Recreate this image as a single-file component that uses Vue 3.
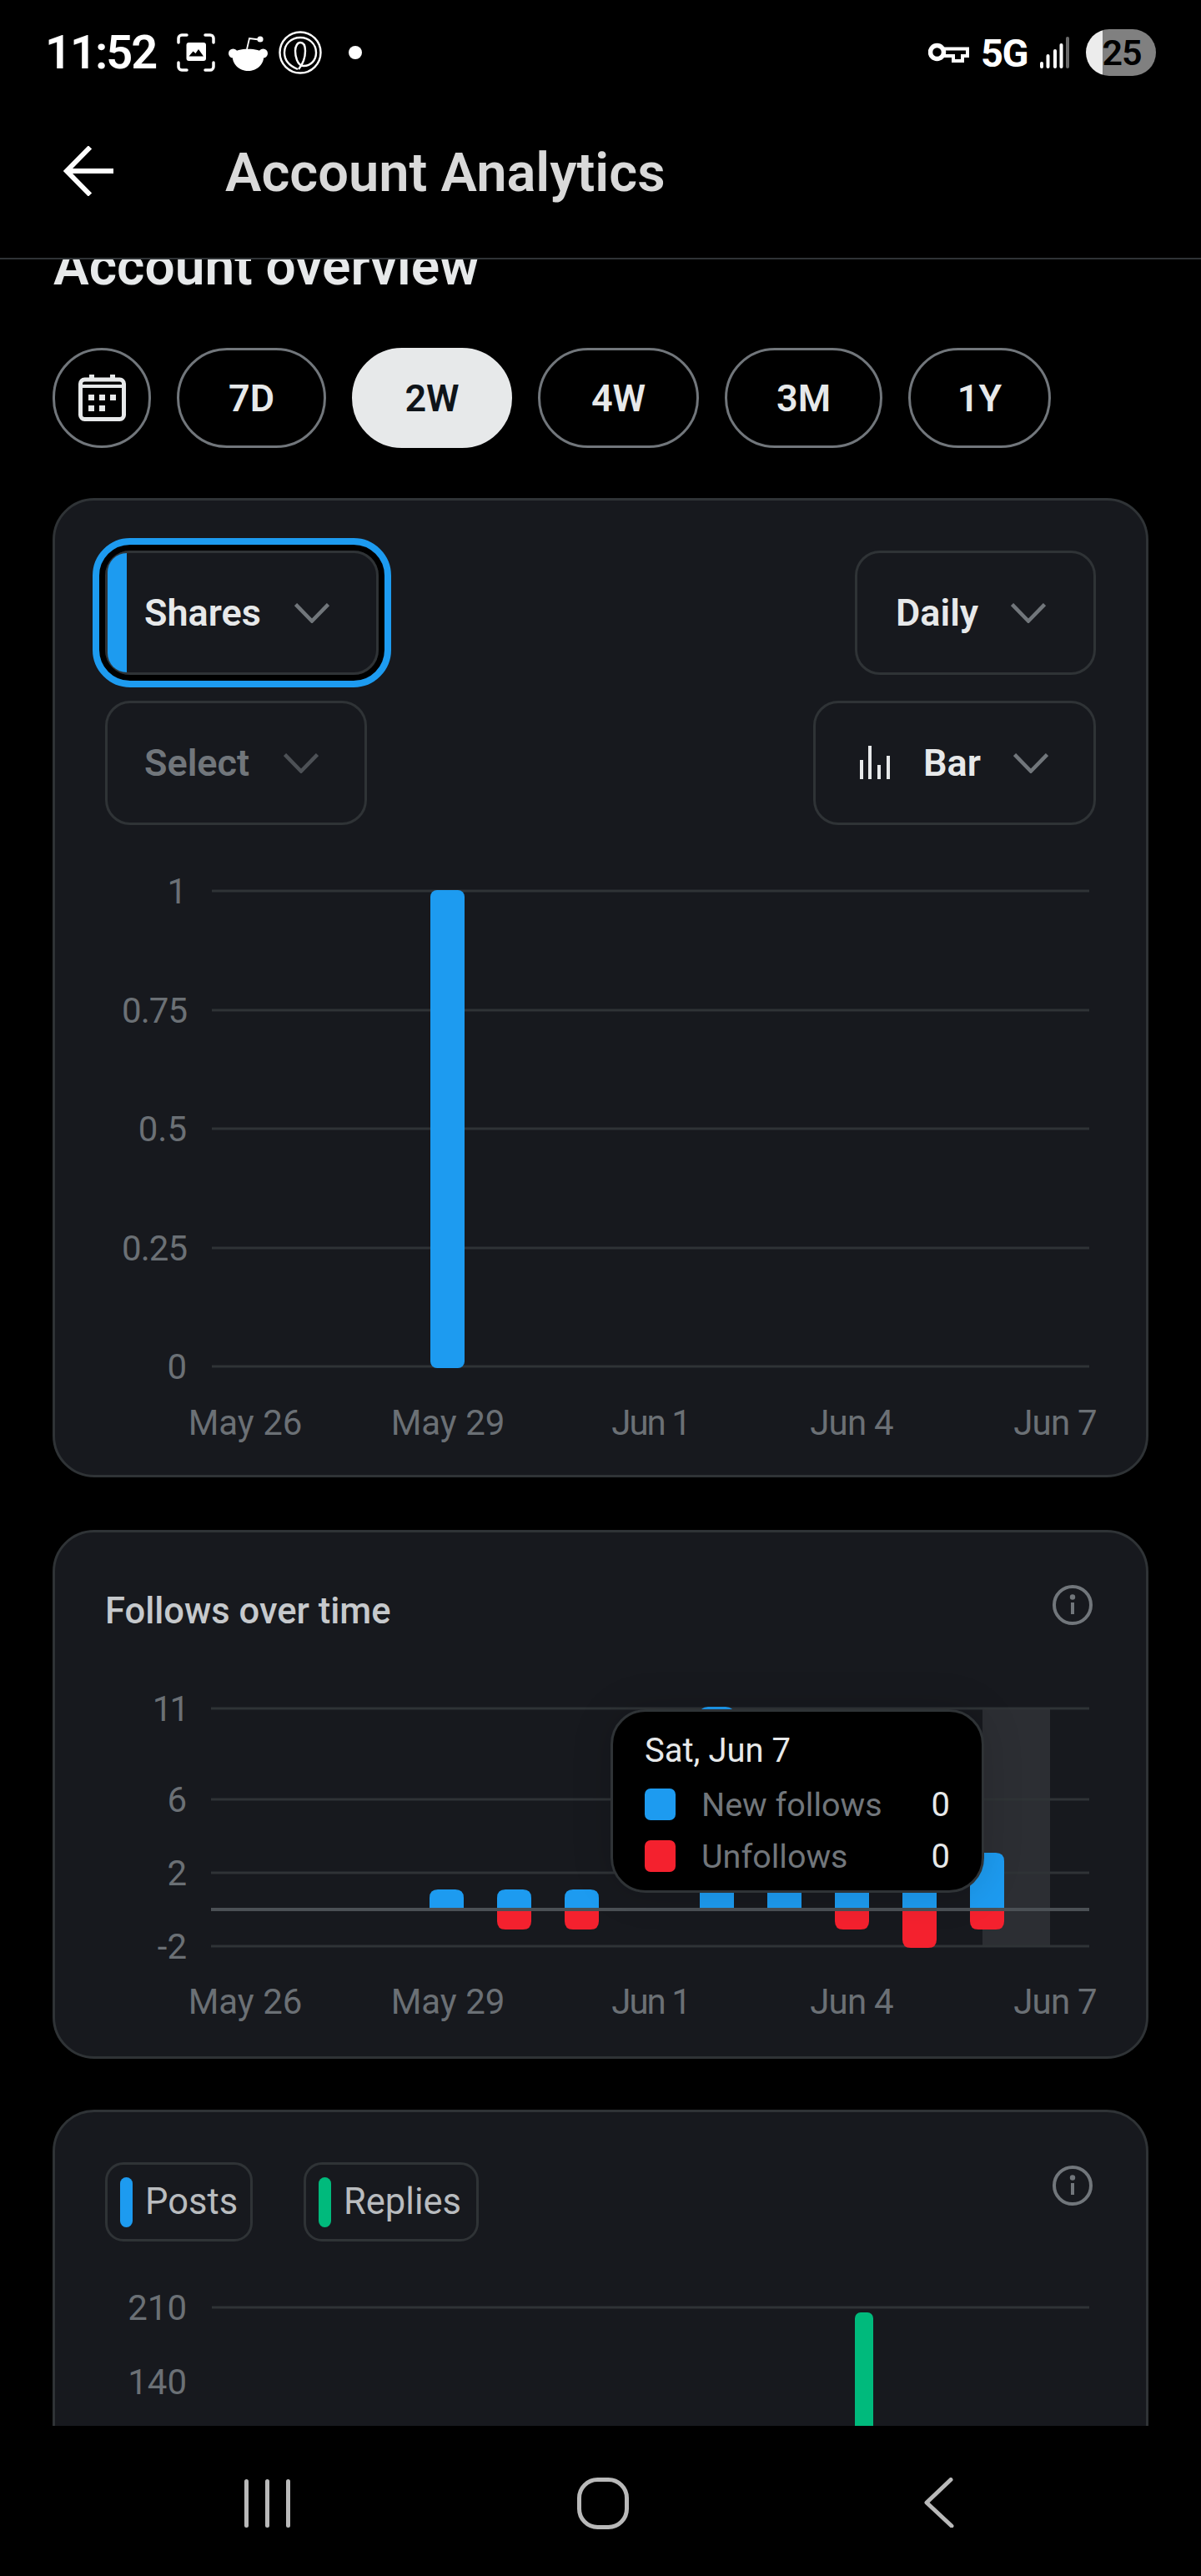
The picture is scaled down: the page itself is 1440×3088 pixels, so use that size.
<script setup>
const pills = [
  { label: '7D', width: 179 },
  { label: '2W', width: 192, active: true },
  { label: '4W', width: 193 },
  { label: '3M', width: 189 },
  { label: '1Y', width: 171 }
]
const xLabels = [
  { t: 'May 26', x: 294, ls: 0 },
  { t: 'May 29', x: 537, ls: 0 },
  { t: 'Jun 1', x: 780, ls: -2 },
  { t: 'Jun 4', x: 1021, ls: -0.8 },
  { t: 'Jun 7', x: 1265, ls: -0.8 }
]
const sharesGrid = [
  { t: '1', y: 1068 },
  { t: '0.75', y: 1211, ls: -1 },
  { t: '0.5', y: 1353 },
  { t: '0.25', y: 1496, ls: -1 },
  { t: '0', y: 1638 }
]
const followGrid = [
  { t: '11', y: 2048, ls: -3 },
  { t: '6', y: 2157 },
  { t: '2', y: 2245 },
  { t: '-2', y: 2333 }
]
const zero = 2290
const followBars = [
  { x: 515, top: 2265 },
  { x: 596, top: 2265, bottom: 2313 },
  { x: 677, top: 2265, bottom: 2313 },
  { x: 839, top: 2046 },
  { x: 920, top: 2200 },
  { x: 1001, top: 2200, bottom: 2313 },
  { x: 1082, top: 2200, bottom: 2335 },
  { x: 1163, top: 2221, bottom: 2313 }
]
const upPath = (b) => `M${b.x} ${zero}V${b.top + 10}Q${b.x} ${b.top} ${b.x + 10} ${b.top}H${b.x + 31}Q${b.x + 41} ${b.top} ${b.x + 41} ${b.top + 10}V${zero}Z`
const downPath = (b) => `M${b.x} ${zero}V${b.bottom - 10}Q${b.x} ${b.bottom} ${b.x + 10} ${b.bottom}H${b.x + 31}Q${b.x + 41} ${b.bottom} ${b.x + 41} ${b.bottom - 10}V${zero}Z`
</script>

<template>
  <div class="phone">
    <div class="status">
      <div class="status-left">
        <span class="time">11:52</span>
        <svg class="st-shot" viewBox="0 0 46 46" fill="none" stroke="#fff" stroke-width="3.500" stroke-linecap="round">
          <path d="M2 11V6a4 4 0 0 1 4-4h6M34 2h6a4 4 0 0 1 4 4v5M44 35v5a4 4 0 0 1-4 4h-6M12 44H6a4 4 0 0 1-4-4v-5" />
          <rect x="11.500" y="11" width="23.500" height="22" rx="3" fill="#fff" stroke="none" />
          <path d="M14.500 27.500l5-6 3 2.500 3.500-5 6 8.500z" fill="#000" stroke="none" />
        </svg>
        <svg class="st-reddit" viewBox="0 0 47 46" fill="#fff">
          <path d="M5 24C10 17 37 17 42 24 44 38 33 45 23.500 45 14 45 3 38 5 24Z" />
          <circle cx="5.500" cy="24" r="5.500" />
          <circle cx="41.500" cy="24" r="5.500" />
          <path d="M22 19l3-13 12 1.500" fill="none" stroke="#fff" stroke-width="1.800" />
          <circle cx="38" cy="7" r="3.600" />
        </svg>
        <svg class="st-spiral" viewBox="0 0 52 52" fill="none" stroke="#fff" stroke-width="2.400">
          <circle cx="26" cy="26" r="24.500" />
          <path d="M23 46C13 42 7 35 7 26 7 16 15 8 26 8c11 0 19 8 19 18 0 9-6 16-15 16-4 0-6-2-8-7-1.500-4-2-8-2-11 0-6 3-10 6-10 4 0 6 4 6 10 0 8-3 16-8 22" />
        </svg>
        <span class="st-dot"></span>
      </div>
      <div class="status-right">
        <svg class="st-key" viewBox="0 0 49 24" fill="none" stroke="#fff" stroke-width="4">
          <circle cx="10.500" cy="11.500" r="8" stroke-width="5.500" />
          <path d="M18 7.500h29v8.500h-6v6H30v-6H18" />
        </svg>
        <span class="st-5g">5G</span>
        <svg class="st-signal" viewBox="0 0 35 38" fill="#fff">
          <rect x="0" y="30" width="4" height="8" rx="2" />
          <rect x="7.500" y="21" width="4" height="17" rx="2" />
          <rect x="16" y="15" width="4" height="23" rx="2" />
          <rect x="23.500" y="8" width="4" height="30" rx="2" />
          <rect x="31" y="0" width="4" height="38" rx="2" fill="#6a6a6a" />
        </svg>
        <div class="battery"><span>25</span></div>
      </div>
    </div>

    <header class="header">
      <svg class="back" viewBox="0 0 60 60" fill="none" stroke="#fff" stroke-width="6">
        <path d="M60 30H4M32 1.500 4 30l28 28.500" stroke-linejoin="miter" />
      </svg>
      <h1 class="title">Account Analytics</h1>
    </header>

    <main class="main">
      <h2 class="overview">Account overview</h2>

      <div class="pills">
        <button class="pill cal">
          <svg class="cal-icon" viewBox="0 0 57 56" fill="none">
            <rect x="2.500" y="6" width="52" height="47.500" rx="5" stroke="#e7e9ea" stroke-width="5" />
            <path d="M2 14h53" stroke="#e7e9ea" stroke-width="4" />
            <path d="M16 0v8M41 0v8" stroke="#e7e9ea" stroke-width="6" />
            <g fill="#e7e9ea">
              <rect x="12" y="24" width="7" height="7" />
              <rect x="25" y="24" width="7" height="7" />
              <rect x="38" y="24" width="7" height="7" />
              <rect x="12" y="37" width="7" height="7" />
              <rect x="25" y="37" width="7" height="7" />
            </g>
          </svg>
        </button>
        <button
          v-for="p in pills"
          :key="p.label"
          class="pill"
          :class="{ active: p.active }"
          :style="{ width: p.width + 'px' }"
        >{{ p.label }}</button>
      </div>

      <section class="card card-shares">
        <div class="controls">
          <div class="select shares">
            <span class="stripe"></span>
            <span class="sel-label">Shares</span>
            <svg class="chev" viewBox="0 0 42 24" fill="none" stroke="#71767b" stroke-width="4.500"><path d="M1.500 1.500 21 21.500 40.500 1.500" /></svg>
          </div>
          <div class="select daily">
            <span class="sel-label">Daily</span>
            <svg class="chev" viewBox="0 0 42 24" fill="none" stroke="#71767b" stroke-width="4.500"><path d="M1.500 1.500 21 21.500 40.500 1.500" /></svg>
          </div>
        </div>
        <div class="controls second">
          <div class="select choose">
            <span class="sel-label muted">Select</span>
            <svg class="chev" viewBox="0 0 42 24" fill="none" stroke="#4d5156" stroke-width="4.500"><path d="M1.500 1.500 21 21.500 40.500 1.500" /></svg>
          </div>
          <div class="select bar">
            <svg class="bar-icon" viewBox="0 0 36 40" fill="#e7e9ea">
              <rect x="0" y="17" width="4" height="23" />
              <rect x="10" y="0" width="4" height="40" />
              <rect x="21" y="23" width="4" height="17" />
              <rect x="32" y="12" width="4" height="28" />
            </svg>
            <span class="sel-label">Bar</span>
            <svg class="chev" viewBox="0 0 42 24" fill="none" stroke="#71767b" stroke-width="4.500"><path d="M1.500 1.500 21 21.500 40.500 1.500" /></svg>
          </div>
        </div>
        <svg class="chart chart-shares" viewBox="126 1020 1188 720">
          <g v-for="g in sharesGrid" :key="g.t">
            <line x1="254" x2="1306" :y1="g.y" :y2="g.y" class="grid" />
            <text x="224" :y="g.y + 15" class="axis" text-anchor="end" :letter-spacing="g.ls">{{ g.t }}</text>
          </g>
          <rect x="516" y="1067" width="41" height="573" rx="8" fill="#1d9bf0" />
          <text v-for="l in xLabels" :key="l.t" :x="l.x" y="1720" class="axis" text-anchor="middle" :letter-spacing="l.ls">{{ l.t }}</text>
        </svg>
      </section>

      <section class="card card-follows">
        <div class="card-head">
          <span class="follow-title">Follows over time</span>
          <svg class="info" viewBox="0 0 48 48" fill="none">
            <circle cx="24" cy="24" r="22" stroke="#71767b" stroke-width="4" />
            <circle cx="24" cy="14.500" r="3.200" fill="#71767b" />
            <rect x="22" y="21" width="4" height="14" fill="#71767b" />
          </svg>
        </div>
        <div class="follow-chart">
          <svg class="chart chart-follows" viewBox="126 2030 1188 400">
            <rect x="1178" y="2048" width="81" height="285" fill="#2c2e33" />
            <g v-for="g in followGrid" :key="g.t">
              <line x1="253" x2="1306" :y1="g.y" :y2="g.y" class="grid" />
              <text x="224" :y="g.y + 15" class="axis" text-anchor="end" :letter-spacing="g.ls">{{ g.t }}</text>
            </g>
            <g v-for="b in followBars" :key="b.x">
              <path :d="upPath(b)" fill="#1d9bf0" />
              <path v-if="b.bottom" :d="downPath(b)" fill="#f4212e" />
            </g>
            <line x1="253" x2="1306" y1="2289" y2="2289" class="zero" />
            <text v-for="l in xLabels" :key="l.t" :x="l.x" y="2414" class="axis" text-anchor="middle" :letter-spacing="l.ls">{{ l.t }}</text>
          </svg>
          <div class="tooltip">
            <div class="tip-date">Sat, Jun 7</div>
            <div class="tip-row">
              <span class="swatch blue"></span>
              <span class="tip-name">New follows</span>
              <span class="tip-val">0</span>
            </div>
            <div class="tip-row">
              <span class="swatch red"></span>
              <span class="tip-name">Unfollows</span>
              <span class="tip-val">0</span>
            </div>
          </div>
        </div>
      </section>

      <section class="card card-posts">
        <div class="card-head">
          <div class="legend">
            <div class="chip posts"><span class="chip-bar blue"></span>Posts</div>
            <div class="chip replies"><span class="chip-bar green"></span>Replies</div>
          </div>
          <svg class="info info-posts" viewBox="0 0 48 48" fill="none">
            <circle cx="24" cy="24" r="22" stroke="#71767b" stroke-width="4" />
            <circle cx="24" cy="14.500" r="3.200" fill="#71767b" />
            <rect x="22" y="21" width="4" height="14" fill="#71767b" />
          </svg>
        </div>
        <svg class="chart chart-posts" viewBox="126 2720 1188 240">
          <line x1="254" x2="1306" y1="2766" y2="2766" class="grid" />
          <text x="224" y="2781" class="axis" text-anchor="end">210</text>
          <text x="224" y="2870" class="axis" text-anchor="end">140</text>
          <rect x="1025" y="2772" width="22" height="200" rx="7" fill="#00ba7c" />
        </svg>
      </section>
    </main>

    <nav class="nav">
      <svg class="nav-recent" viewBox="0 0 56 58" fill="#b9b9b9">
        <rect x="0" y="0" width="5" height="58" rx="2.500" />
        <rect x="25" y="0" width="5" height="58" rx="2.500" />
        <rect x="50" y="0" width="5" height="58" rx="2.500" />
      </svg>
      <svg class="nav-home" viewBox="0 0 62 62" fill="none"><rect x="2.500" y="2.500" width="57" height="57" rx="22" stroke="#b9b9b9" stroke-width="5" /></svg>
      <svg class="nav-back" viewBox="0 0 36 60" fill="none"><path d="M32 2.500 3 30l30 28" stroke="#b9b9b9" stroke-width="5" stroke-linecap="round" stroke-linejoin="round" /></svg>
    </nav>
  </div>
</template>

<style>
html, body { margin: 0; background: #000; }
</style>

<style scoped>
.phone {
  width: 1440px;
  height: 3088px;
  background: #000;
  display: flex;
  flex-direction: column;
  overflow: hidden;
  font-family: Roboto, "Liberation Sans", sans-serif;
  color: #e7e9ea;
}
.status {
  height: 126px;
  flex: none;
  display: flex;
  align-items: center;
  justify-content: space-between;
  padding: 0 54px 0 54px;
}
.status-left, .status-right { display: flex; align-items: center; }
.time { font-size: 56px; font-weight: 600; color: #fff; width: 133px; letter-spacing: -2px; line-height: 1; white-space: nowrap; }
.st-shot { width: 46px; height: 46px; margin-left: 25px; }
.st-reddit { width: 47px; height: 46px; margin-left: 16px; }
.st-spiral { width: 52px; height: 52px; margin-left: 13px; }
.st-dot { width: 16px; height: 16px; border-radius: 50%; background: #fff; margin-left: 32px; }
.st-key { width: 49px; height: 24px; }
.st-5g { font-size: 47px; font-weight: 700; color: #fff; width: 58px; margin-left: 14px; letter-spacing: -1.500px; line-height: 1; white-space: nowrap; }
.st-signal { width: 35px; height: 38px; margin-left: 13px; }
.battery {
  width: 84px;
  height: 56px;
  margin-left: 20px;
  border-radius: 28px;
  background: linear-gradient(90deg, #ececec 0 20px, #808080 20px);
  color: #000;
  font-size: 43px;
  font-weight: 600;
  letter-spacing: -1px;
  line-height: 56px;
  text-align: center;
}
.battery span { margin-left: 2px; }
.header {
  height: 185px;
  flex: none;
  box-sizing: border-box;
  border-bottom: 2px solid #2f3336;
  padding: 0 0 26px 76px;
  display: flex;
  align-items: center;
}
.back { width: 60px; height: 60px; }
.title { margin: 6px 0 0 134px; font-size: 65px; font-weight: 600; color: #d9d9d9; line-height: 1; white-space: nowrap; }
.main { flex: none; height: 2597px; overflow: hidden; padding: 0 63px; box-sizing: border-box; }
.overview { margin: -28px 0 0 1px; font-size: 64px; font-weight: 600; color: #e7e9ea; line-height: 74px; white-space: nowrap; }
.pills { display: flex; gap: 31px; margin-top: 60px; }
.pill {
  height: 120px;
  box-sizing: border-box;
  border: 3px solid #71767b;
  border-radius: 60px;
  background: #000;
  color: #e7e9ea;
  font-family: inherit;
  font-size: 45px;
  font-weight: 600;
  padding: 0;
  display: flex;
  align-items: center;
  justify-content: center;
}
.pill.active { background: #e7e9ea; border-color: #e7e9ea; color: #0f1419; }
.pill.cal { width: 118px; }
.cal-icon { width: 57px; height: 56px; }
.card {
  box-sizing: border-box;
  width: 1314px;
  background: #17191e;
  border: 3px solid #2f3336;
  border-radius: 50px;
  padding: 60px;
}
.card-shares { height: 1174px; margin-top: 60px; }
.card-follows { height: 634px; margin-top: 63px; }
.card-posts { height: 800px; margin-top: 61px; }
.controls { display: flex; justify-content: space-between; }
.controls.second { margin-top: 31px; }
.select {
  box-sizing: border-box;
  height: 149px;
  border: 3px solid #2f3336;
  border-radius: 30px;
  display: flex;
  align-items: center;
  position: relative;
}
.sel-label { font-size: 45px; font-weight: 600; color: #e7e9ea; line-height: 1; }
.sel-label.muted { color: #71767b; }
.chev { width: 42px; height: 24px; flex: none; }
.select.shares {
  width: 328px;
  padding-left: 44px;
  outline: 8px solid #1d9bf0;
  outline-offset: 7px;
  box-shadow: 0 0 0 7px #000;
  overflow: visible;
}
.stripe {
  position: absolute;
  left: 0;
  top: 0;
  bottom: 0;
  width: 23px;
  background: #1d9bf0;
  border-radius: 27px 0 0 27px;
}
.shares .chev { margin-left: 40px; }
.select.daily { width: 289px; padding-left: 46px; }
.daily .chev { margin-left: 39px; }
.select.choose { width: 314px; padding-left: 44px; }
.choose .chev { margin-left: 41px; }
.select.bar { width: 339px; padding-left: 53px; }
.bar-icon { width: 36px; height: 40px; margin-right: 40px; margin-top: -2px; }
.bar .chev { margin-left: 39px; }
.chart { display: block; overflow: visible; }
.chart-shares { width: 1188px; height: 720px; margin-top: 31px; }
.chart-follows { width: 1188px; height: 400px; }
.chart-posts { width: 1188px; height: 240px; margin-top: 33px; }
.grid { stroke: #2f3336; stroke-width: 3; }
.zero { stroke: #4b5055; stroke-width: 4; }
.axis { font-size: 42px; fill: #6b7075; font-family: Roboto, "Liberation Sans", sans-serif; }
.card-head { display: flex; justify-content: space-between; align-items: flex-start; }
.follow-title { font-size: 43.500px; font-weight: 500; color: #c6c9cc; line-height: 70px; }
.info { width: 48px; height: 48px; flex: none; margin: 3px 4px 0 0; }
.info-posts { margin-top: 4px; }
.follow-chart { position: relative; margin-top: 63px; }
.tooltip {
  position: absolute;
  left: 606px;
  top: 19px;
  width: 448px;
  height: 220px;
  box-sizing: border-box;
  background: #000;
  border: 3px solid #2f3336;
  border-radius: 42px;
  padding: 22px 38px 0 38px;
  box-shadow: 0 0 50px rgba(0, 0, 0, .14);
}
.tip-date { font-size: 40px; color: #e7e9ea; line-height: 50px; }
.tip-row { display: flex; align-items: center; height: 62px; }
.tip-date + .tip-row { margin-top: 8px; }
.swatch { width: 37px; height: 38px; border-radius: 7px; flex: none; }
.swatch.blue { background: #1d9bf0; }
.swatch.red { background: #f4212e; }
.tip-name { font-size: 39.500px; color: #71767b; margin-left: 31px; flex: 1; }
.tip-val { font-size: 40px; color: #e7e9ea; }
.legend { display: flex; gap: 61px; }
.chip {
  box-sizing: border-box;
  height: 95px;
  border: 3px solid #2f3336;
  border-radius: 22px;
  display: flex;
  align-items: center;
  padding-left: 15px;
  font-size: 43.500px;
  color: #b9bcbf;
  line-height: 1;
}
.chip.posts { width: 177px; }
.chip.replies { width: 210px; }
.chip-bar { width: 15px; height: 60px; border-radius: 8px; margin-right: 15px; flex: none; }
.chip-bar.blue { background: #1d9bf0; }
.chip-bar.green { background: #00ba7c; }
.nav {
  flex: 1;
  position: relative;
  background: #000;
  display: flex;
  align-items: flex-start;
  padding-top: 62px;
}
.nav-recent { width: 56px; height: 58px; margin-left: 293px; margin-top: 2px; }
.nav-home { width: 62px; height: 62px; margin-left: 343px; }
.nav-back { width: 36px; height: 60px; margin-left: 354px; }
</style>
